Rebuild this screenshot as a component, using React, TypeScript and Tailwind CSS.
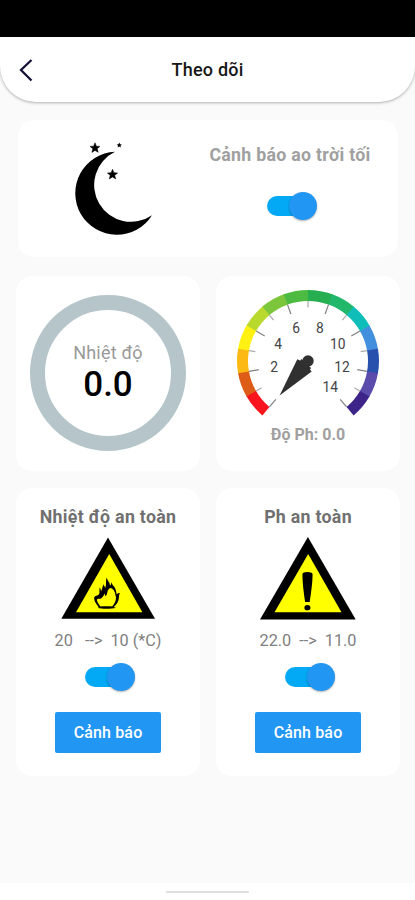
import React from "react";

const SEGMENTS = [
  "#f9131c", "#dd5c17", "#fdb913", "#fff112", "#b9d92f", "#7cc63c", "#4dbb42",
  "#27ae51", "#22b86b", "#0fbdb9", "#428fdd", "#2850ad", "#5b4baa", "#3d2489",
];

const CX = 72;
const CY = 72;

function polar(radius: number, value: number) {
  const a = ((130 + value * 20) * Math.PI) / 180;
  return { x: CX + radius * Math.cos(a), y: CY + radius * Math.sin(a) };
}

function Toggle() {
  return (
    <div className="flex h-7 w-[51px] items-center rounded-full">
      <div className="flex h-5 w-[46px] items-center rounded-full bg-[#03a9f4]">
        <div className="ml-[22.5px] size-7 shrink-0 rounded-full bg-[#2196f3] shadow-[0_1px_2px_rgba(0,0,0,0.3)]" />
      </div>
    </div>
  );
}

function Moon() {
  return (
    <svg width="80" height="96" viewBox="74 140 80 96" className="block">
      <path d="M115 151.8A41.5 41.5 0 1 0 152 215.2A36.82 36.82 0 1 1 115 151.8Z" />
      <path d="M95 142.8l1.4 3.4 3.5.2-2.7 2.3 1 3.6-3.2-1.9-3.1 2 .9-3.7-2.8-2.3 3.6-.2z" stroke="#000" strokeWidth="0.5" />
      <path d="M112.5 169.3l1.4 3.4 3.7.3-2.9 2.3 1 3.6-3.2-2-3.2 2 .9-3.6-2.8-2.3 3.7-.3z" stroke="#000" strokeWidth="0.5" />
      <path d="M119.3 142.6l.8 1.7 1.8.2-1.4 1.2.4 1.9-1.6-1-1.7 1 .5-1.9-1.4-1.2 1.8-.2z" />
    </svg>
  );
}

function Gauge() {
  return (
    <svg width="144" height="130" viewBox="0 0 144 130" className="block">
      {SEGMENTS.map((color, i) => {
        const end = Math.min(i + 1.03, 14);
        const a = polar(71, i);
        const b = polar(71, end);
        const c = polar(60, end);
        const d = polar(60, i);
        return (
          <path
            key={color}
            fill={color}
            d={`M${a.x} ${a.y}A71 71 0 0 1 ${b.x} ${b.y}L${c.x} ${c.y}A60 60 0 0 0 ${d.x} ${d.y}Z`}
          />
        );
      })}
      {Array.from({ length: 15 }, (_, i) => {
        const major = i % 2 === 0;
        const a = polar(60, i);
        const b = polar(major ? 50 : 53.5, i);
        return (
          <line key={i} x1={a.x} y1={a.y} x2={b.x} y2={b.y} stroke={major ? "#808080" : "#aaaaaa"} strokeWidth="1.2" />
        );
      })}
      {[2, 4, 6, 8, 10, 12, 14].map((n) => {
        const p = polar(34.5, n);
        return (
          <text key={n} x={p.x} y={p.y + 4.9} textAnchor="middle" fontSize="13.8" fill="#444444">
            {n}
          </text>
        );
      })}
      <path d="M43.6 106.4L61.3 70.3L66 72.5L73.5 80L75.7 82.5Z" fill="#303030" />
      <path d="M65.5 70L75 79L73.5 81.5L62 74Z" fill="#303030" />
      <circle cx="72" cy="72" r="5.7" fill="#303030" />
    </svg>
  );
}

function FireSign() {
  return (
    <svg width="96" height="84" viewBox="61 536 96 84" className="block">
      <path d="M109 537.5L156 618.8H62.3Z" />
      <path d="M110.2 554L143.4 612.3H77Z" fill="#ffff00" />
      <path
        fillRule="evenodd"
        d="M100 607.4C97.5 604.5 94.7 601 95.2 597.6C96 595.2 98.9 596 100 594.2C101.2 592.3 99.7 590.3 100.8 587.6C101.8 589 101.8 590.2 102 591.5C103.6 589 103.1 586.5 104.8 584.3C105 586.1 106 586.8 106.2 588.2C107.6 584.7 106.6 580.8 107.5 577.6C108.4 580.8 110.8 581.8 111 585.6C112.4 584.4 112 583.5 112.7 582.3C112.7 585 115.2 586 116.2 588.5C117.3 591 117.2 592.7 117.8 594.5C118.5 593.7 118.8 593.1 120.9 593.1C119.6 595.2 120.4 597.6 119.3 600.8C118.2 603.6 116.6 605.4 114.5 607.4ZM101.5 606.6H113.2C115.2 604.1 117.3 600.8 117 597C116.4 595.8 116.4 594.5 115.8 592.6C115 589.8 113.4 588.5 111.6 588C110.2 588 110 589.6 109 590C108.2 591.4 108.7 594.2 106.7 596.2C105.7 595.2 106.2 594.4 105.8 593.6C104.7 595.2 104.3 597.1 102 598.6C100.1 599.2 98.7 598.1 98 599.5C97.6 601.5 99.8 603.9 101.5 606.6Z"
      />
      <path d="M98.5 607.7C103 606.2 112 606.2 117 607.7C112 609.2 103 609.2 98.5 607.7Z" />
    </svg>
  );
}

function CautionSign() {
  return (
    <svg width="98" height="84" viewBox="259 536 98 84" className="block">
      <path d="M307.9 537L355.7 619.6H260Z" />
      <path d="M308.2 554L341.5 612.3H274.5Z" fill="#ffff00" />
      <path d="M302.4 574.3C302.4 572.8 304.5 572 307.3 572S312.6 572.8 312.6 574.3C312.6 583 311 593 309.7 602H305.1C303.8 593 302.4 583 302.4 574.3Z" />
      <ellipse cx="307.4" cy="607.7" rx="3" ry="2.6" />
    </svg>
  );
}

type SafetyProps = { title: string; range: React.ReactNode; children: React.ReactNode };

function SafetyCard({ title, range, children }: SafetyProps) {
  return (
    <section className="flex h-72 w-[184px] flex-col items-center rounded-2xl bg-white pt-[17px]">
      <h2 className="text-[17.8px] leading-6 font-bold tracking-[0.27px] text-[#707070]">{title}</h2>
      <div className="mt-[7px]">{children}</div>
      <p className="mt-[11px] flex text-[16.3px] leading-5 text-[#808080]">{range}</p>
      <div className="mt-[12px] mr-[-4px]">
        <Toggle />
      </div>
      <button className="mt-[21px] h-[41px] w-[106px] rounded-[2px] bg-[#2196f3] text-[16px] font-medium tracking-[0.15px] text-white">
        Cảnh báo
      </button>
    </section>
  );
}

export default function App() {
  return (
    <div className="flex h-[900px] w-[415px] flex-col overflow-hidden bg-[#fafafa] font-[Roboto,sans-serif]">
      <div className="h-[37px] shrink-0 bg-black" />
      <header className="grid h-[65px] shrink-0 grid-cols-[52px_1fr_52px] items-center rounded-b-[36px] bg-white shadow-[0_1px_3px_rgba(0,0,0,0.3)]">
        <svg width="16" height="24" viewBox="0 0 16 24" className="ml-[18px]">
          <path d="M13.5 2L3 12L13.5 22.5" fill="none" stroke="#151238" strokeWidth="2.3" />
        </svg>
        <h1 className="text-center text-[18px] leading-6 font-medium tracking-[0.2px] text-[#171717]">Theo dõi</h1>
      </header>

      <main className="flex flex-1 flex-col">
        <section className="mt-[18px] ml-[18px] flex h-[137px] w-[380px] rounded-2xl bg-white">
          <div className="pt-5 pl-14">
            <Moon />
          </div>
          <div className="ml-[55px] flex w-[162px] flex-col items-center pt-[23px]">
            <p className="whitespace-nowrap text-[17.8px] leading-6 font-bold tracking-[0.27px] text-[#a0a0a0]">Cảnh báo ao trời tối</p>
            <div className="mt-[25px] ml-1">
              <Toggle />
            </div>
          </div>
        </section>

        <div className="mt-[19px] flex gap-4 pl-4">
          <section className="flex h-[195px] w-[184px] justify-center rounded-2xl bg-white pt-[19px]">
            <div className="flex size-[156px] flex-col items-center rounded-full border-[15px] border-[#b5c5ca] pt-[31px]">
              <p className="text-[18px] leading-6 tracking-[0.2px] text-[#999999]">Nhiệt độ</p>
              <p className="text-[35px] leading-10 font-medium text-black">0.0</p>
            </div>
          </section>
          <section className="flex h-[195px] w-[184px] flex-col items-center rounded-2xl bg-white pt-[13px]">
            <Gauge />
            <p className="mt-[4px] text-[16px] leading-6 font-bold text-[#a0a0a0]">Độ Ph: 0.0</p>
          </section>
        </div>

        <div className="mt-[17px] flex gap-4 pl-4">
          <SafetyCard
            title="Nhiệt độ an toàn"
            range={
              <>
                <span>20</span>
                <span className="ml-3">--&gt;</span>
                <span className="ml-2">10 (*C)</span>
              </>
            }
          >
            <FireSign />
          </SafetyCard>
          <SafetyCard
            title="Ph an toàn"
            range={
              <>
                <span>22.0</span>
                <span className="ml-2">--&gt;</span>
                <span className="ml-2">11.0</span>
              </>
            }
          >
            <CautionSign />
          </SafetyCard>
        </div>
      </main>

      <footer className="flex h-[17px] shrink-0 justify-center bg-white pt-2">
        <div className="h-[2px] w-[83px] rounded-full bg-[#dedede]" />
      </footer>
    </div>
  );
}
